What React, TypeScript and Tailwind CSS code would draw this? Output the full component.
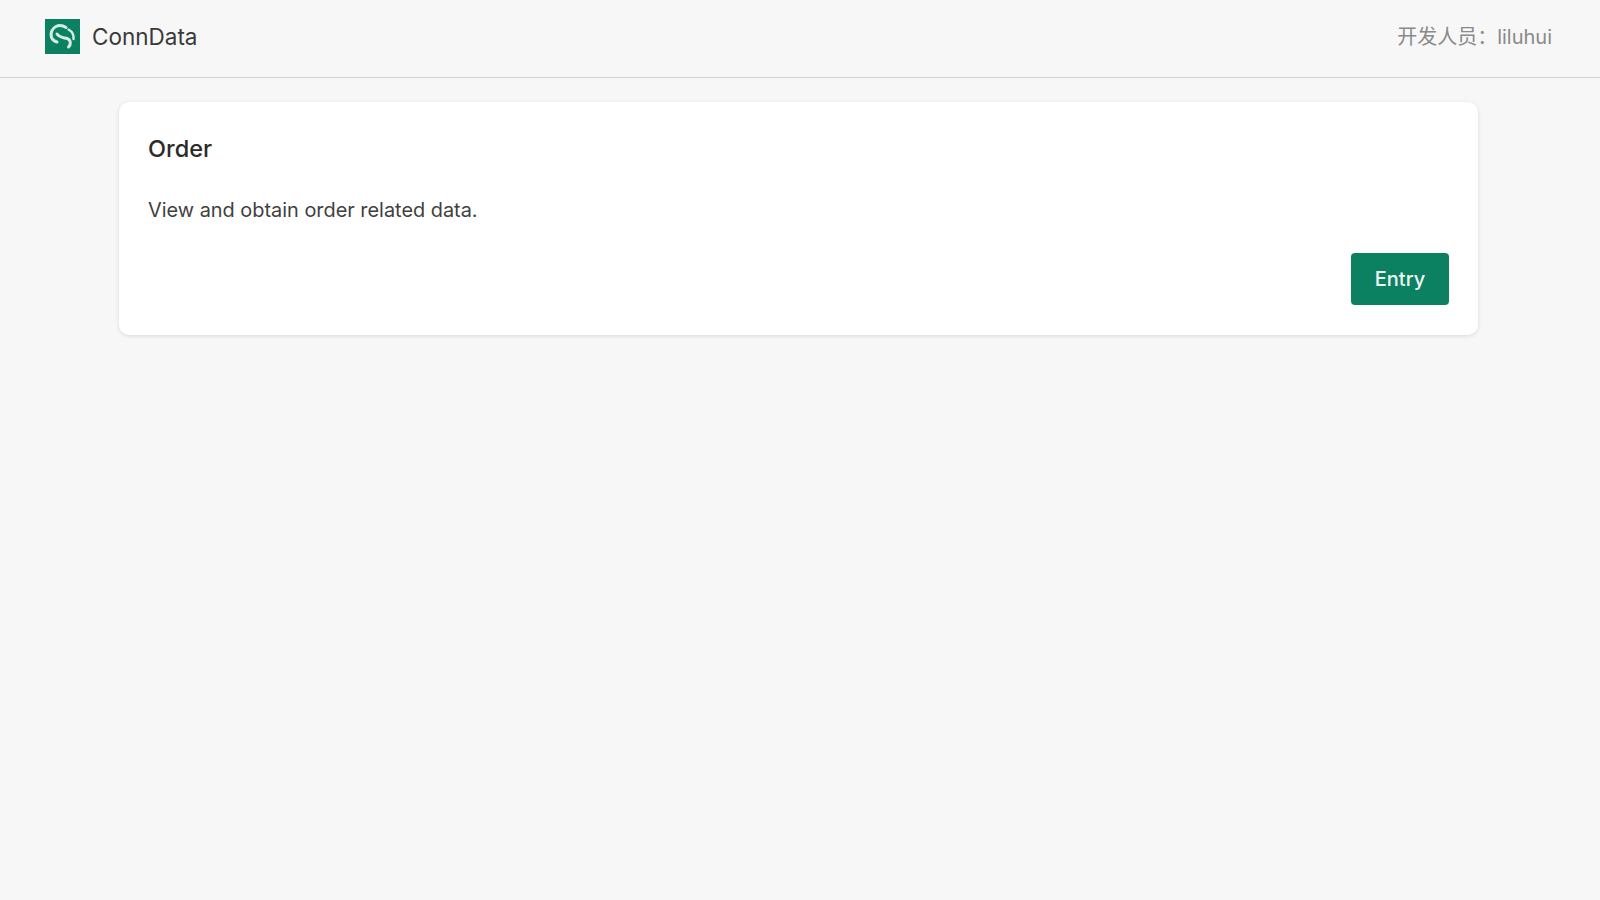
const font = 'font-["Inter","Noto_Sans_CJK_SC",sans-serif]'

function Logo() {
  return (
    <svg width="35" height="35" viewBox="0 0 35 35" className="shrink-0">
      <rect width="35" height="35" fill="#0b8162" />
      <path
        d="M21 8.5 C18 6.5 14 6 11 7.5 C7 9.5 5 14 6.5 18.5 C7.5 21 9.5 22.5 12 23"
        fill="none"
        stroke="#d5ebe4"
        strokeWidth="3"
        strokeLinecap="round"
      />
      <path
        d="M12 15 C14.5 18.5 18.5 18.5 22 19.5 C25.5 20.5 26.5 25 23.5 28"
        fill="none"
        stroke="#d5ebe4"
        strokeWidth="3"
        strokeLinecap="round"
      />
      <path d="M23.5 10.5 C27 12.5 29 16 28.5 20" fill="none" stroke="#d5ebe4" strokeWidth="2.4" strokeLinecap="round" />
    </svg>
  )
}

export default function App() {
  return (
    <div className={`flex min-h-[900px] flex-col bg-[#f7f7f7] ${font}`}>
      {/* Header */}
      <header className="flex h-[78px] items-center justify-between border-b border-[#d4d4d4] pb-1 pl-[45px] pr-[48px]">
        <div className="flex items-center gap-3">
          <Logo />
          <span className="text-[22.5px] text-[#3a3a3a]">ConnData</span>
        </div>
        <span className="text-[20px] text-[#8a8a8a]">开发人员：liluhui</span>
      </header>

      {/* Card */}
      <main className="pl-[119px] pr-[122px] pt-6">
        <div className="rounded-[10px] bg-white px-[29px] pb-[30px] pt-[29px] shadow-[0_1px_4px_rgba(0,0,0,0.12)]">
          <h2 className="text-[23.5px] font-medium leading-[36px] text-[#2b2b2b]">Order</h2>
          <p className="mt-[29px] text-[19.9px] leading-[28px] text-[#3f3f3f]">View and obtain order related data.</p>
          <div className="mt-[29px] flex justify-end">
            <button className="h-[52px] w-[98px] rounded-[4px] bg-[#0b8162] text-[20px] font-medium text-[#eef7f4]">
              Entry
            </button>
          </div>
        </div>
      </main>
    </div>
  )
}
